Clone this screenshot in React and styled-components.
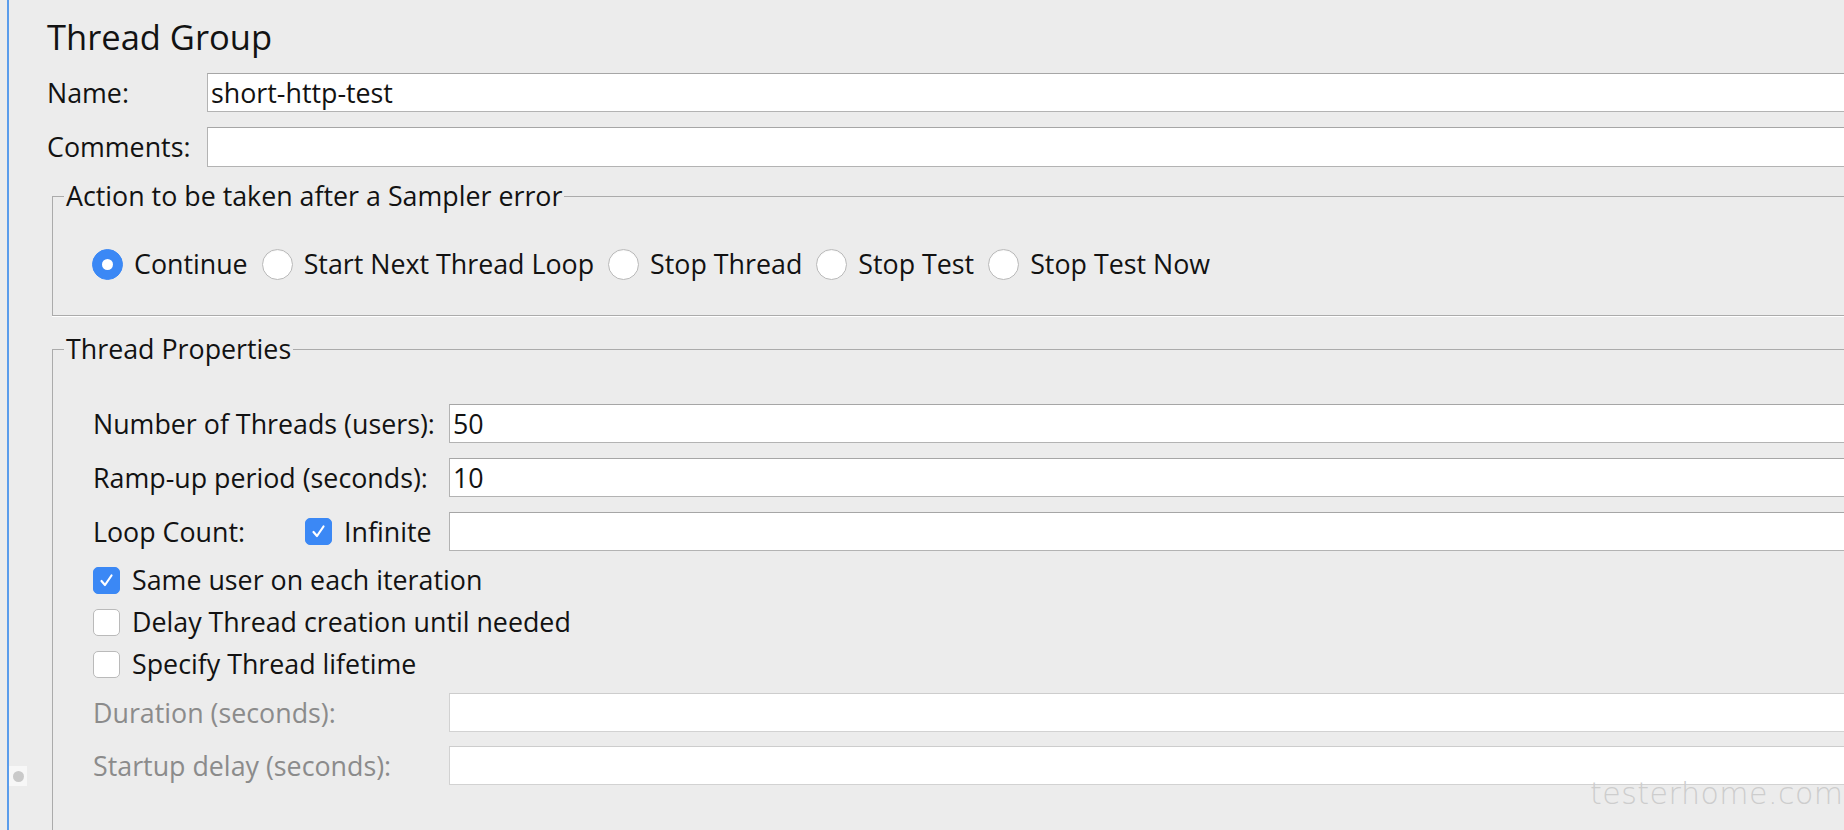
import React from 'react';
import styled, { createGlobalStyle } from 'styled-components';

const GlobalStyle = createGlobalStyle`
  html, body { margin: 0; padding: 0; background: #ececec; overflow: hidden; }
  body { font-family: "Open Sans", "Liberation Sans", sans-serif; color: #121212; }
  * { box-sizing: border-box; }
`;

const Window = styled.div`
  position: relative;
  display: flex;
  width: 1920px;
  height: 830px;
  background: #ececec;
  overflow: hidden;
`;

const TreeEdge = styled.div`
  flex: none;
  width: 7px;
`;

const Editor = styled.main`
  position: relative;
  flex: 1;
  border-left: 2px solid #5a9ceb;
  padding: 14px 0 0 38px;
`;

const SplitKnob = styled.div`
  position: absolute;
  left: 0;
  top: 766px;
  width: 18px;
  height: 20px;
  background: #f7f7f7;
  display: flex;
  align-items: center;
  justify-content: center;
  &::after {
    content: "";
    width: 11px;
    height: 11px;
    border-radius: 50%;
    background: #c9c9c9;
  }
`;

const Title = styled.h1`
  margin: 0;
  font-size: 34.5px;
  font-weight: 400;
  line-height: 46px;
  color: #121212;
`;

const FieldRow = styled.div`
  display: grid;
  grid-template-columns: ${(p) => p.$labelWidth}px 1fr;
  align-items: center;
  height: ${(p) => p.$height}px;
  margin-top: ${(p) => p.$gap}px;
`;

const Label = styled.span`
  font-size: 26.8px;
  line-height: 36px;
  white-space: nowrap;
  color: ${(p) => (p.$disabled ? '#8b8b8b' : '#121212')};
`;

const TextBox = styled.input`
  height: 100%;
  width: 100%;
  margin: 0;
  padding: 0 3px;
  border: 1px solid ${(p) => (p.$disabled ? '#d2d2d2' : '#b3b3b3')};
  border-top-color: ${(p) => (p.$disabled ? '#cdcdcd' : '#a6a6a6')};
  background: #fff;
  font-family: "Open Sans", "Liberation Sans", sans-serif;
  font-size: 26.8px;
  color: #121212;
  outline: none;
`;

const Group = styled.fieldset`
  margin: ${(p) => p.$gap}px 0 0 5px;
  padding: 0;
  min-width: 0;
  border: 1px solid #ababab;
  box-shadow: 0 1px 0 #fff;
`;

const GroupTitle = styled.legend`
  margin-left: 11px;
  padding: 0 2px;
  font-size: 26.8px;
  line-height: 36px;
  color: #121212;
`;

const RadioBar = styled.div`
  display: flex;
  align-items: center;
  gap: 14px;
  padding: 32px 0 33px 39px;
`;

const Choice = styled.label`
  display: flex;
  align-items: center;
  gap: 11px;
  font-size: 26.8px;
  line-height: 36px;
  white-space: nowrap;
`;

const RadioDot = styled.span`
  flex: none;
  width: 31px;
  height: 31px;
  border-radius: 50%;
  display: flex;
  align-items: center;
  justify-content: center;
  background: ${(p) => (p.$on ? '#3b88f5' : '#fff')};
  border: 1px solid ${(p) => (p.$on ? '#3b88f5' : '#b9b9b9')};
  box-shadow: ${(p) => (p.$on ? 'none' : 'inset 0 1px 1px rgba(0,0,0,0.04)')};
  &::after {
    content: "";
    display: ${(p) => (p.$on ? 'block' : 'none')};
    width: 11px;
    height: 11px;
    border-radius: 50%;
    background: #fff;
  }
`;

const PropsBody = styled.div`
  display: flex;
  flex-direction: column;
  padding: 37px 0 90px 40px;
`;

const LoopCell = styled.div`
  display: flex;
  align-items: center;
`;

const LoopLabel = styled(Label)`
  width: 212px;
`;

const InfiniteBox = styled.div`
  display: flex;
  align-items: center;
  gap: 12px;
`;

const CheckRow = styled.label`
  display: flex;
  align-items: center;
  gap: 12px;
  height: 42px;
  margin-top: ${(p) => p.$gap || 0}px;
  font-size: 26.8px;
  line-height: 36px;
  white-space: nowrap;
`;

const Box = styled.span`
  flex: none;
  width: 27px;
  height: 27px;
  border-radius: 5px;
  display: flex;
  align-items: center;
  justify-content: center;
  background: ${(p) => (p.$on ? '#3b88f5' : '#fff')};
  border: 1px solid ${(p) => (p.$on ? '#3b88f5' : '#bababa')};
`;

const Watermark = styled.div`
  position: absolute;
  left: 1590px;
  top: 779px;
  font-family: "DejaVu Sans", sans-serif;
  font-weight: 200;
  font-size: 30px;
  line-height: 30px;
  letter-spacing: 0.5px;
  color: #cdcdcd;
  white-space: nowrap;
  pointer-events: none;
`;

function Check({ on }) {
  return (
    <Box $on={on}>
      {on && (
        <svg width="17" height="17" viewBox="0 0 17 17">
          <polyline points="3.5,9 7,13 13.5,3.5" fill="none" stroke="#fff" strokeWidth="2.2" strokeLinecap="round" strokeLinejoin="round" />
        </svg>
      )}
    </Box>
  );
}

const actions = ['Continue', 'Start Next Thread Loop', 'Stop Thread', 'Stop Test', 'Stop Test Now'];

export default function App() {
  return (
    <>
      <GlobalStyle />
      <Window>
        <TreeEdge />
        <Editor>
          <SplitKnob />
          <Title>Thread Group</Title>
          <FieldRow $labelWidth={160} $height={37} $gap={13}>
            <Label>Name:</Label>
            <TextBox readOnly value="short-http-test" />
          </FieldRow>
          <FieldRow $labelWidth={160} $height={40} $gap={17}>
            <Label>Comments:</Label>
            <TextBox readOnly value="" />
          </FieldRow>

          <Group $gap={11}>
            <GroupTitle>Action to be taken after a Sampler error</GroupTitle>
            <RadioBar>
              {actions.map((a, i) => (
                <Choice key={a}>
                  <RadioDot $on={i === 0} />
                  {a}
                </Choice>
              ))}
            </RadioBar>
          </Group>

          <Group $gap={15}>
            <GroupTitle>Thread Properties</GroupTitle>
            <PropsBody>
              <FieldRow $labelWidth={356} $height={37} $gap={0}>
                <Label>Number of Threads (users):</Label>
                <TextBox readOnly value="50" />
              </FieldRow>
              <FieldRow $labelWidth={356} $height={37} $gap={17}>
                <Label>Ramp-up period (seconds):</Label>
                <TextBox readOnly value="10" />
              </FieldRow>
              <FieldRow $labelWidth={356} $height={37} $gap={17}>
                <LoopCell>
                  <LoopLabel>Loop Count:</LoopLabel>
                  <InfiniteBox>
                    <Check on />
                    <Label>Infinite</Label>
                  </InfiniteBox>
                </LoopCell>
                <TextBox readOnly value="" />
              </FieldRow>
              <CheckRow $gap={10}>
                <Check on />
                Same user on each iteration
              </CheckRow>
              <CheckRow>
                <Check />
                Delay Thread creation until needed
              </CheckRow>
              <CheckRow>
                <Check />
                Specify Thread lifetime
              </CheckRow>
              <FieldRow $labelWidth={356} $height={37} $gap={8}>
                <Label $disabled>Duration (seconds):</Label>
                <TextBox $disabled readOnly value="" />
              </FieldRow>
              <FieldRow $labelWidth={356} $height={37} $gap={16}>
                <Label $disabled>Startup delay (seconds):</Label>
                <TextBox $disabled readOnly value="" />
              </FieldRow>
            </PropsBody>
          </Group>
        </Editor>
        <Watermark>testerhome.com</Watermark>
      </Window>
    </>
  );
}
